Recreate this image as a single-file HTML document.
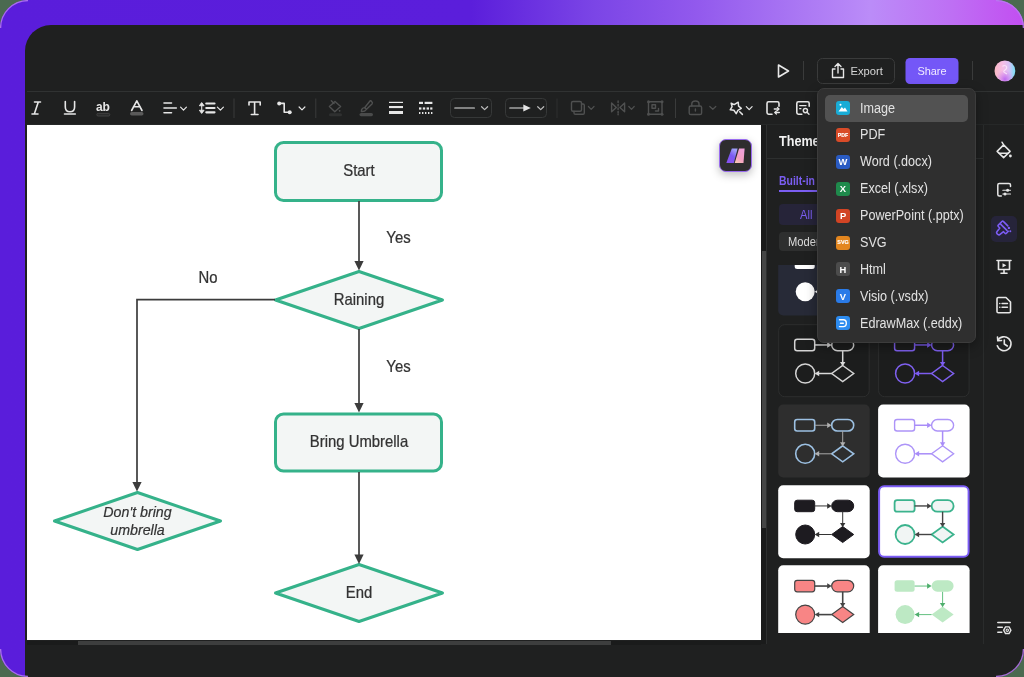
<!DOCTYPE html>
<html><head><meta charset="utf-8">
<style>
*{margin:0;padding:0;box-sizing:border-box}
html,body{width:1024px;height:677px;overflow:hidden;background:#4b6a50;font-family:"Liberation Sans",sans-serif}
#root{position:absolute;left:0;top:0;width:1024px;height:677px;will-change:transform}
.abs{position:absolute}
#frame{position:absolute;left:0;top:0;width:1024px;height:677px;border-radius:28px;overflow:hidden;
 background:linear-gradient(90deg,#5a1ddb 0%,#5b1edb 46%,#7b45e6 58%,#9259ed 68%,#bb8cf8 85%,#be6ff4 93%,#c24ef1 100%)}
#app{position:absolute;left:25px;top:25px;width:999px;height:652px;background:#1f2020;border-top-left-radius:26px;overflow:hidden}
.hline{position:absolute;height:1px;background:#2f3131}
.vline{position:absolute;width:1px;background:#3a3b3b}
.ic{position:absolute;overflow:visible}
.t{position:absolute;white-space:nowrap;transform-origin:0 0}
</style></head>
<body><div id="root">
<div id="frame"><div id="app"></div></div>
<svg class="abs" style="left:0;top:0" width="1024" height="677" viewBox="0 0 1024 677">
 <g fill="none" stroke="#b97af2" stroke-width="1.3" opacity="0.85">
  <path d="M0.6 28 A27.4 27.4 0 0 1 28 0.6"/>
  <path d="M996 0.6 A27.4 27.4 0 0 1 1023.4 28"/>
  <path d="M1023.4 649 A27.4 27.4 0 0 1 996 676.4"/>
  <path d="M28 676.4 A27.4 27.4 0 0 1 0.6 649"/>
 </g>
</svg>

<!-- header -->
<div class="hline" style="left:27px;top:91px;width:997px;background:#303232"></div>
<div class="hline" style="left:27px;top:124px;width:997px;background:#262828"></div>


<!-- toolbar svg -->
<svg class="abs" style="left:0;top:0" width="1024" height="125" viewBox="0 0 1024 125">
 <g fill="none" stroke="#e8e8e8" stroke-width="1.6" stroke-linecap="round" stroke-linejoin="round">
  <!-- play -->
  <path d="M778.5 65 L788.5 71 L778.5 77 Z"/>
 </g>
 <!-- header separators -->
 <rect x="803" y="61" width="1" height="19" fill="#3a3b3b"/>
 <rect x="972" y="61" width="1" height="19" fill="#3a3b3b"/>
 <!-- export btn -->
 <rect x="817.5" y="58.5" width="77" height="25" rx="5" fill="#1f2020" stroke="#3a3b3b"/>
 <g fill="none" stroke="#e6e6e6" stroke-width="1.4" stroke-linecap="round" stroke-linejoin="round">
  <path d="M835 69 L832.5 69 L832.5 77.5 L843.5 77.5 L843.5 69 L841 69"/>
  <path d="M838 73 L838 63.5 M835 66.5 L838 63.5 L841 66.5"/>
 </g>
 <text x="850.5" y="75" fill="#d6d6d6" font-size="11.8" transform="translate(850.5 0) scale(0.95 1) translate(-850.5 0)">Export</text>
 <!-- share btn -->
 <rect x="905.5" y="58" width="53" height="26" rx="4.5" fill="#7457f7"/>
 <text x="932" y="75" fill="#f0ebff" font-size="11.4" text-anchor="middle" transform="translate(932 0) scale(0.96 1) translate(-932 0)">Share</text>
 <!-- avatar -->
 <defs>
  <linearGradient id="av" x1="0" y1="0" x2="1" y2="0">
   <stop offset="0" stop-color="#f9b9c4"/><stop offset="0.4" stop-color="#f6bde6"/><stop offset="0.7" stop-color="#d9c0f6"/><stop offset="1" stop-color="#74e0f4"/>
  </linearGradient>
  <radialGradient id="av2" cx="0.5" cy="0.9" r="0.45"><stop offset="0" stop-color="#b860f0" stop-opacity="0.9"/><stop offset="1" stop-color="#d080f0" stop-opacity="0"/></radialGradient>
 </defs>
 <circle cx="1004.9" cy="70.9" r="10.4" fill="url(#av)"/>
 <circle cx="1004.9" cy="70.9" r="10.4" fill="url(#av2)"/>
 <g fill="none" stroke="#fbe6fa" stroke-width="1.1" opacity="0.85">
  <path d="M1002.5 66.5 Q1004.5 64.5 1006.5 66.5 Q1007.5 68.5 1004.5 70.5 Q1003 71.5 1004.5 72.5 L1007 74"/>
 </g>

 <!-- toolbar: bright icons -->
 <g fill="none" stroke="#e6e6e6" stroke-width="1.6" stroke-linecap="round" stroke-linejoin="round">
  <!-- italic -->
  <path d="M34.5 102 L40.5 102 M32 114 L38 114 M38.3 102 L34.3 114"/>
  <!-- underline -->
  <path d="M65.3 101.5 L65.3 107 Q65.3 111.8 70 111.8 Q74.6 111.8 74.6 107 L74.6 101.5"/>
  <path d="M64.5 114 L75.3 114"/>
  <!-- A -->
  <path d="M131.6 110.5 L136.8 100.8 L142 110.5 M133.4 106.8 L140.2 106.8"/>
  <!-- align -->
  <path d="M164 103 L171.5 103 M164 108 L176.3 108 M164 112.7 L171.5 112.7"/>
  <path d="M180.6 107.2 L183.5 110.2 L186.4 107.2" stroke-width="1.2"/>
  <!-- line spacing -->
  <path d="M201.7 105 L201.7 111" stroke-width="1.1"/>
  <path d="M199.6 105.4 L201.7 102.6 L203.8 105.4 Z M199.6 110.6 L201.7 113.4 L203.8 110.6 Z" fill="#e6e6e6" stroke-width="1"/>
  <path d="M206.3 103.5 L214.5 103.5 M206.3 108 L214.5 108 M206.3 112.3 L214.5 112.3" stroke-width="2.2"/>
  <path d="M217.4 107.2 L220.4 110.2 L223.4 107.2" stroke-width="1.2"/>
  <!-- T -->
  <path d="M249 105 L249 102 L260.2 102 L260.2 105 M254.6 102 L254.6 114.5 M251.3 114.5 L258 114.5"/>
  <!-- connector -->
  <path d="M279.2 103.4 L284.2 103.4 L284.2 112.2 L289.7 112.2"/>
  <path d="M299.1 107 L302 109.9 L304.9 107" stroke-width="1.2"/>
  <!-- star wand -->
  <path d="M731.2 103.2 L734.2 104.6 L738.2 102.2 L738.6 106.2 L741.3 108.4 L737.9 110.4 L736.2 113.6 L733.9 110.3 L730.2 109.8 L732.1 106.6 Z" stroke-width="1.5"/>
  <path d="M739.7 111.8 L742.4 114.4" stroke-width="1.5"/>
  <path d="M746.3 106.7 L749.2 109.6 L752.1 106.7" stroke-width="1.2"/>
  <!-- replace -->
  <path d="M772 114.2 L768.6 114.2 Q767 114.2 767 112.6 L767 103.4 Q767 101.8 768.6 101.8 L777.4 101.8 Q779 101.8 779 103.4 L779 106.3"/>
  <path d="M774.3 109 L778.5 109 M779.3 112.5 L775.2 112.5" stroke-width="1.4"/>
  <path d="M777.4 107.5 L779 109 L777.4 110.5 M776.4 111 L774.8 112.5 L776.4 114" stroke-width="1.2"/>
  <!-- search doc -->
  <path d="M801.8 114.2 L798.4 114.2 Q796.8 114.2 796.8 112.6 L796.8 103.4 Q796.8 101.8 798.4 101.8 L807.6 101.8 Q809.2 101.8 809.2 103.4 L809.2 106.3"/>
  <path d="M799.7 105.6 L806 105.6 M799.7 108.7 L800.9 108.7" stroke-width="1.3"/>
  <circle cx="805.4" cy="110.6" r="2.1" stroke-width="1.4"/>
  <path d="M807 112.3 L809 114.3" stroke-width="1.4"/>
 </g>
 <!-- connector dots -->
 <circle cx="279.2" cy="103.4" r="2" fill="#e6e6e6"/>
 <circle cx="289.7" cy="112.2" r="2" fill="#e6e6e6"/>
 <!-- ab text -->
 <text x="96" y="110.6" fill="#e6e6e6" font-size="12" font-weight="bold" letter-spacing="-0.1">ab</text>
 <rect x="96.8" y="113.4" width="13" height="2.6" rx="1.3" fill="#2a2b2b" stroke="#484848" stroke-width="0.8"/>
 <!-- A bar -->
 <rect x="130" y="112" width="13.5" height="3.4" rx="1.7" fill="#5a5a5a"/>
 <!-- line thickness -->
 <rect x="389" y="101.8" width="14" height="1.2" fill="#e6e6e6"/>
 <rect x="389" y="106" width="14" height="2.1" fill="#e6e6e6"/>
 <rect x="389" y="111" width="14" height="3" fill="#e6e6e6"/>
 <!-- dashes -->
 <g fill="#e6e6e6">
  <rect x="419" y="101.8" width="4" height="2.2"/><rect x="424.6" y="101.8" width="7.8" height="2.2"/>
  <rect x="419" y="107.4" width="2.4" height="2.2"/><rect x="422.8" y="107.4" width="2.4" height="2.2"/><rect x="426.6" y="107.4" width="2.4" height="2.2"/><rect x="430.2" y="107.4" width="2.2" height="2.2"/>
  <rect x="419" y="112" width="1.4" height="2"/><rect x="422" y="112" width="1.4" height="2"/><rect x="425" y="112" width="1.4" height="2"/><rect x="428" y="112" width="1.4" height="2"/><rect x="431" y="112" width="1.4" height="2"/>
 </g>
 <!-- separators -->
 <rect x="233.5" y="98.5" width="1" height="19.5" fill="#3a3b3b"/>
 <rect x="315.3" y="98.5" width="1" height="19.5" fill="#3a3b3b"/>
 <rect x="556.5" y="98.5" width="1" height="19.5" fill="#2e2f2f"/>
 <rect x="675" y="98.5" width="1" height="19.5" fill="#3a3b3b"/>
 <!-- dropdown boxes -->
 <rect x="450.5" y="98.5" width="41" height="19" rx="4" fill="none" stroke="#363838"/>
 <rect x="505.5" y="98.5" width="41" height="19" rx="4" fill="none" stroke="#363838"/>
 <g fill="none" stroke="#c8c8c8" stroke-linecap="round" stroke-linejoin="round">
  <path d="M455 108 L474.2 108" stroke-width="1.7" stroke="#a2a2a2"/>
  <path d="M481.6 106.7 L484.6 109.6 L487.6 106.7" stroke-width="1.2" stroke="#bdbdbd"/>
  <path d="M510 108 L523.5 108" stroke-width="1.7" stroke="#a2a2a2"/>
  <path d="M537.7 106.7 L540.7 109.6 L543.7 106.7" stroke-width="1.2" stroke="#bdbdbd"/>
 </g>
 <path d="M523.3 104.4 L530.8 108 L523.3 111.6 Z" fill="#e4e4e4"/>
 <!-- dim icons -->
 <g fill="none" stroke="#4f5050" stroke-width="1.4" stroke-linecap="round" stroke-linejoin="round">
  <!-- bucket -->
  <path d="M335 101.5 L340.6 106.6 L334.8 111.8 L329.4 106.6 Z"/>
  <path d="M331.3 100.8 L334 103.5"/>
  <!-- brush -->
  <path d="M371.8 101.8 Q373 102.8 372 104 L366.5 109.2 M370.2 100.8 Q371 100.4 371.8 101.8 M370.2 100.8 L364.8 107.5"/>
  <path d="M364.6 107.6 Q361.2 108 361.4 111.5 Q364.8 111.8 366.4 109.3 Z"/>
  <!-- layers -->
  <rect x="571.5" y="101.5" width="10" height="9.8" rx="1.5"/>
  <path d="M581.5 104 L583 104 Q584.3 104 584.3 105.3 L584.3 113 Q584.3 114.3 583 114.3 L575.3 114.3 Q574 114.3 574 113 L574 111.3"/>
  <path d="M588.4 106.5 L591.2 109.3 L594 106.5" stroke-width="1.2"/>
  <!-- flip -->
  <path d="M611.6 103 L611.6 111.8 L616.3 107.4 Z M624.6 103 L624.6 111.8 L619.9 107.4 Z"/>
  <path d="M618.1 101 L618.1 102.5 M618.1 104.5 L618.1 106 M618.1 108 L618.1 109.5 M618.1 111.5 L618.1 113 M618.1 114.3 L618.1 114.8"/>
  <path d="M628.8 106.5 L631.5 109.3 L634.2 106.5" stroke-width="1.2"/>
  <!-- group -->
  <rect x="648.5" y="101.8" width="13.5" height="12.5"/>
  <rect x="652" y="104.8" width="3.5" height="3.5"/>
  <path d="M658.5 108.5 L658.5 111 L655.5 111"/>
  <!-- lock -->
  <rect x="689.2" y="106" width="12.4" height="8.5" rx="1.6"/>
  <path d="M691.8 106 L691.8 104 Q691.8 101 695.4 101 Q699 101 699 104 L699 106 M695.4 109 L695.4 111"/>
  <path d="M709.8 106.5 L712.8 109.3 L715.8 106.5" stroke-width="1.2"/>
 </g>
 <g fill="#4f5050">
  <circle cx="648.5" cy="101.8" r="1.5"/><circle cx="662" cy="101.8" r="1.5"/><circle cx="648.5" cy="114.3" r="1.5"/><circle cx="662" cy="114.3" r="1.5"/>
  <circle cx="339.6" cy="110.8" r="0.9"/>
  <rect x="329" y="113.2" width="13" height="3" rx="1.5" fill="#2f3030"/>
  <rect x="359.5" y="113" width="13.5" height="3.2" rx="1.6" fill="#4a4b4b"/>
 </g>
</svg>

<!-- canvas -->
<div class="abs" style="left:27px;top:125px;width:734px;height:515px;background:#fff;overflow:hidden">
<svg class="abs" style="left:-27px;top:-125px" width="1024" height="677" viewBox="0 0 1024 677">
 <g fill="#f3f6f5" stroke="#35b28a" stroke-width="3" stroke-linejoin="round">
  <rect x="275.5" y="142.5" width="166" height="58" rx="8"/>
  <polygon points="275.5,300 359,271.5 442.5,300 359,328.5"/>
  <rect x="275.5" y="414" width="166" height="57" rx="8"/>
  <polygon points="275.5,593 359,564.5 442.5,593 359,621.5"/>
  <polygon points="54.5,521 137.5,492.5 220.5,521 137.5,549.5"/>
 </g>
 <g stroke="#3c3c3c" stroke-width="1.7" fill="none">
  <line x1="359" y1="201" x2="359" y2="263"/>
  <line x1="359" y1="329" x2="359" y2="405"/>
  <line x1="359" y1="472" x2="359" y2="556"/>
  <polyline points="275,299.6 137,299.6 137,484"/>
 </g>
 <g fill="#3c3c3c">
  <polygon points="354.4,261 363.6,261 359,270.5"/>
  <polygon points="354.4,403 363.6,403 359,412.5"/>
  <polygon points="354.4,554.5 363.6,554.5 359,564"/>
  <polygon points="132.4,482 141.6,482 137,491.5"/>
 </g>
 <g fill="#333" font-family="Liberation Sans" font-size="16" stroke="#333" stroke-width="0.25" text-anchor="middle">
  <text transform="translate(359.0,176.1) scale(0.93,1)">Start</text>
  <text transform="translate(359.0,305.0) scale(0.93,1)">Raining</text>
  <text transform="translate(359.0,447.1) scale(0.93,1)">Bring Umbrella</text>
  <text transform="translate(359.0,597.7) scale(0.93,1)">End</text>
  <text transform="translate(398.5,243.2) scale(0.93,1)">Yes</text>
  <text transform="translate(398.5,372.1) scale(0.93,1)">Yes</text>
  <text transform="translate(208.0,282.5) scale(0.93,1)">No</text>
 </g>
 <g fill="#333" font-family="Liberation Sans" font-style="italic" font-size="15" text-anchor="middle" stroke="#333" stroke-width="0.2">
  <text transform="translate(137.5,517) scale(0.95,1)">Don't bring</text>
  <text transform="translate(137.5,534.5) scale(0.95,1)">umbrella</text>
 </g>
</svg>
</div>

<!-- canvas scrollbars -->
<div class="abs" style="left:761px;top:125px;width:4.5px;height:519px;background:#1a1b1b"></div>
<div class="abs" style="left:761.5px;top:251px;width:4px;height:276.5px;background:#454646"></div>
<div class="abs" style="left:27px;top:640.5px;width:734px;height:4px;background:#1a1b1b"></div>
<div class="abs" style="left:78px;top:641px;width:532.5px;height:4px;background:#3d3e3e"></div>
<div class="abs" style="left:765.5px;top:125px;width:1px;height:519px;background:#2d2f2f"></div>
<div class="abs" style="left:983px;top:125px;width:1px;height:519px;background:#2a2c2c"></div>
<!-- panel header -->
<div class="hline" style="left:766px;top:158px;width:217px;background:#2d2f2f"></div>
<div class="t" style="left:779px;top:133.4px;font-size:14px;font-weight:bold;color:#f2f2f2;transform:scaleX(0.9)">Theme</div>
<div class="t" style="left:778.5px;top:173.5px;font-size:12px;font-weight:bold;color:#7b5ef2;transform:scaleX(0.87)">Built-in</div>
<div class="abs" style="left:778.5px;top:190px;width:50px;height:2px;background:#7b5ef2"></div>
<div class="abs" style="left:778.5px;top:204px;width:90px;height:20.5px;border-radius:4px;background:#262439"></div>
<div class="t" style="left:799.5px;top:207.5px;font-size:12px;color:#7a5ef0;transform:scaleX(0.93)">All</div>
<div class="abs" style="left:778.5px;top:232px;width:90px;height:19px;border-radius:4px;background:#2e2f2f"></div>
<div class="t" style="left:787.5px;top:234.5px;font-size:12px;color:#dedede;transform:scaleX(0.93)">Modern</div>
<!-- theme cards -->
<div class="abs" style="left:766px;top:264.8px;width:217px;height:368.5px;overflow:hidden">
<svg class="abs" style="left:-766px;top:-264.8px" width="1024" height="677" viewBox="0 0 1024 677">
<rect x="778.2" y="242.5" width="91.5" height="73" rx="5" fill="#272a37"/>
<g fill="#ffffff" stroke="none"><rect x="794.7" y="257.5" width="20" height="11.5" rx="2.5"/><rect x="831.7" y="257.5" width="22" height="11.5" rx="5.75"/><path d="M842.7 283.8 L853.7 291.8 L842.7 299.8 L831.7 291.8 Z"/><circle cx="805.2" cy="291.8" r="9.5"/></g>
<g stroke="#ffffff" stroke-width="1" fill="none"><path d="M814.7 263.25 L828.2 263.25"/><path d="M842.7 269.0 L842.7 281.3"/><path d="M831.7 291.8 L818.2 291.8"/></g>
<g fill="#fff"><path d="M827.2 260.5 L831.7 263.25 L827.2 266.0 Z"/><path d="M840.0 280.3 L842.7 284.5 L845.4000000000001 280.3 Z"/><path d="M819.2 289.1 L814.7 291.8 L819.2 294.5 Z"/></g>
<rect x="878.1" y="242.5" width="91.5" height="73" rx="5" fill="#272a37"/>
<g fill="#ffffff" stroke="none"><rect x="894.6" y="257.5" width="20" height="11.5" rx="2.5"/><rect x="931.6" y="257.5" width="22" height="11.5" rx="5.75"/><path d="M942.6 283.8 L953.6 291.8 L942.6 299.8 L931.6 291.8 Z"/><circle cx="905.1" cy="291.8" r="9.5"/></g>
<g stroke="#ffffff" stroke-width="1" fill="none"><path d="M914.6 263.25 L928.1 263.25"/><path d="M942.6 269.0 L942.6 281.3"/><path d="M931.6 291.8 L918.1 291.8"/></g>
<g fill="#fff"><path d="M927.1 260.5 L931.6 263.25 L927.1 266.0 Z"/><path d="M939.9 280.3 L942.6 284.5 L945.3000000000001 280.3 Z"/><path d="M919.1 289.1 L914.6 291.8 L919.1 294.5 Z"/></g>
<rect x="778.7" y="324.7" width="90.5" height="72" rx="6" fill="#1c1d1d" stroke="#2d2e2e" stroke-width="1"/>
<g fill="none" stroke="#d4d4d4" stroke-width="1.5"><rect x="794.7" y="339.2" width="20" height="11.5" rx="2.5"/><rect x="831.7" y="339.2" width="22" height="11.5" rx="5.75"/><path d="M842.7 365.5 L853.7 373.5 L842.7 381.5 L831.7 373.5 Z"/><circle cx="805.2" cy="373.5" r="9.5"/></g>
<g stroke="#d9d9d9" stroke-width="1.5" fill="none"><path d="M814.7 344.95 L828.2 344.95"/><path d="M842.7 350.7 L842.7 363.0"/><path d="M831.7 373.5 L818.2 373.5"/></g>
<g fill="#d9d9d9"><path d="M827.2 342.2 L831.7 344.95 L827.2 347.7 Z"/><path d="M840.0 362.0 L842.7 366.2 L845.4000000000001 362.0 Z"/><path d="M819.2 370.8 L814.7 373.5 L819.2 376.2 Z"/></g>
<rect x="878.6" y="324.7" width="90.5" height="72" rx="6" fill="#1c1d1d" stroke="#2d2e2e" stroke-width="1"/>
<g fill="none" stroke="#7f60f0" stroke-width="1.5"><rect x="894.6" y="339.2" width="20" height="11.5" rx="2.5"/><rect x="931.6" y="339.2" width="22" height="11.5" rx="5.75"/><path d="M942.6 365.5 L953.6 373.5 L942.6 381.5 L931.6 373.5 Z"/><circle cx="905.1" cy="373.5" r="9.5"/></g>
<g stroke="#7c5cf0" stroke-width="1.5" fill="none"><path d="M914.6 344.95 L928.1 344.95"/><path d="M942.6 350.7 L942.6 363.0"/><path d="M931.6 373.5 L918.1 373.5"/></g>
<g fill="#7c5cf0"><path d="M927.1 342.2 L931.6 344.95 L927.1 347.7 Z"/><path d="M939.9 362.0 L942.6 366.2 L945.3000000000001 362.0 Z"/><path d="M919.1 370.8 L914.6 373.5 L919.1 376.2 Z"/></g>
<rect x="778.2" y="404.5" width="91.5" height="73" rx="5" fill="#2e2e2e"/>
<g fill="none" stroke="#9cc0e2" stroke-width="1.6"><rect x="794.7" y="419.5" width="20" height="11.5" rx="2.5"/><rect x="831.7" y="419.5" width="22" height="11.5" rx="5.75"/><path d="M842.7 445.8 L853.7 453.8 L842.7 461.8 L831.7 453.8 Z"/><circle cx="805.2" cy="453.8" r="9.5"/></g>
<g stroke="#a8a8a8" stroke-width="1" fill="none"><path d="M814.7 425.25 L828.2 425.25"/><path d="M842.7 431.0 L842.7 443.3"/><path d="M831.7 453.8 L818.2 453.8"/></g>
<g fill="#b0b0b0"><path d="M827.2 422.5 L831.7 425.25 L827.2 428.0 Z"/><path d="M840.0 442.3 L842.7 446.5 L845.4000000000001 442.3 Z"/><path d="M819.2 451.1 L814.7 453.8 L819.2 456.5 Z"/></g>
<rect x="878.1" y="404.5" width="91.5" height="73" rx="5" fill="#ffffff"/>
<g fill="none" stroke="#ad94f8" stroke-width="1.4"><rect x="894.6" y="419.5" width="20" height="11.5" rx="2.5"/><rect x="931.6" y="419.5" width="22" height="11.5" rx="5.75"/><path d="M942.6 445.8 L953.6 453.8 L942.6 461.8 L931.6 453.8 Z"/><circle cx="905.1" cy="453.8" r="9.5"/></g>
<g stroke="#a88cf8" stroke-width="1.5" fill="none"><path d="M914.6 425.25 L928.1 425.25"/><path d="M942.6 431.0 L942.6 443.3"/><path d="M931.6 453.8 L918.1 453.8"/></g>
<g fill="#a88cf8"><path d="M927.1 422.5 L931.6 425.25 L927.1 428.0 Z"/><path d="M939.9 442.3 L942.6 446.5 L945.3000000000001 442.3 Z"/><path d="M919.1 451.1 L914.6 453.8 L919.1 456.5 Z"/></g>
<rect x="778.2" y="485.2" width="91.5" height="73" rx="5" fill="#ffffff"/>
<g fill="#1d1b20" stroke="#1d1b20" stroke-width="1"><rect x="794.7" y="500.2" width="20" height="11.5" rx="2.5"/><rect x="831.7" y="500.2" width="22" height="11.5" rx="5.75"/><path d="M842.7 526.5 L853.7 534.5 L842.7 542.5 L831.7 534.5 Z"/><circle cx="805.2" cy="534.5" r="9.5"/></g>
<g stroke="#333" stroke-width="1" fill="none"><path d="M814.7 505.95 L828.2 505.95"/><path d="M842.7 511.7 L842.7 524.0"/><path d="M831.7 534.5 L818.2 534.5"/></g>
<g fill="#333"><path d="M827.2 503.2 L831.7 505.95 L827.2 508.7 Z"/><path d="M840.0 523.0 L842.7 527.2 L845.4000000000001 523.0 Z"/><path d="M819.2 531.8 L814.7 534.5 L819.2 537.2 Z"/></g>
<rect x="879.1" y="486.2" width="89.5" height="70.5" rx="5" fill="#ffffff" stroke="#7b5cf5" stroke-width="2"/>
<g fill="#f1f5f4" stroke="#3bb38d" stroke-width="1.8"><rect x="894.6" y="500.2" width="20" height="11.5" rx="2.5"/><rect x="931.6" y="500.2" width="22" height="11.5" rx="5.75"/><path d="M942.6 526.5 L953.6 534.5 L942.6 542.5 L931.6 534.5 Z"/><circle cx="905.1" cy="534.5" r="9.5"/></g>
<g stroke="#444" stroke-width="1.4" fill="none"><path d="M914.6 505.95 L928.1 505.95"/><path d="M942.6 511.7 L942.6 524.0"/><path d="M931.6 534.5 L918.1 534.5"/></g>
<g fill="#444"><path d="M927.1 503.2 L931.6 505.95 L927.1 508.7 Z"/><path d="M939.9 523.0 L942.6 527.2 L945.3000000000001 523.0 Z"/><path d="M919.1 531.8 L914.6 534.5 L919.1 537.2 Z"/></g>
<rect x="778.2" y="565.3" width="91.5" height="73" rx="5" fill="#ffffff"/>
<g fill="#f88585" stroke="#444" stroke-width="1.2"><rect x="794.7" y="580.3" width="20" height="11.5" rx="2.5"/><rect x="831.7" y="580.3" width="22" height="11.5" rx="5.75"/><path d="M842.7 606.5999999999999 L853.7 614.5999999999999 L842.7 622.5999999999999 L831.7 614.5999999999999 Z"/><circle cx="805.2" cy="614.5999999999999" r="9.5"/></g>
<g stroke="#444" stroke-width="1.6" fill="none"><path d="M814.7 586.05 L828.2 586.05"/><path d="M842.7 591.8 L842.7 604.0999999999999"/><path d="M831.7 614.5999999999999 L818.2 614.5999999999999"/></g>
<g fill="#444"><path d="M827.2 583.3 L831.7 586.05 L827.2 588.8 Z"/><path d="M840.0 603.0999999999999 L842.7 607.3 L845.4000000000001 603.0999999999999 Z"/><path d="M819.2 611.8999999999999 L814.7 614.5999999999999 L819.2 617.3 Z"/></g>
<rect x="878.1" y="565.3" width="91.5" height="73" rx="5" fill="#ffffff"/>
<g fill="#bde9c4" stroke="none"><rect x="894.6" y="580.3" width="20" height="11.5" rx="2.5"/><rect x="931.6" y="580.3" width="22" height="11.5" rx="5.75"/><path d="M942.6 606.5999999999999 L953.6 614.5999999999999 L942.6 622.5999999999999 L931.6 614.5999999999999 Z"/><circle cx="905.1" cy="614.5999999999999" r="9.5"/></g>
<g stroke="#64c080" stroke-width="1" fill="none"><path d="M914.6 586.05 L928.1 586.05"/><path d="M942.6 591.8 L942.6 604.0999999999999"/><path d="M931.6 614.5999999999999 L918.1 614.5999999999999"/></g>
<g fill="#4eae6c"><path d="M927.1 583.3 L931.6 586.05 L927.1 588.8 Z"/><path d="M939.9 603.0999999999999 L942.6 607.3 L945.3000000000001 603.0999999999999 Z"/><path d="M919.1 611.8999999999999 L914.6 614.5999999999999 L919.1 617.3 Z"/></g>
</svg>
</div>
<!-- right sidebar icons -->
<div class="abs" style="left:991px;top:215.5px;width:26px;height:26px;border-radius:5px;background:#26243a"></div>
<svg class="abs" style="left:0;top:0" width="1024" height="677" viewBox="0 0 1024 677">
 <g fill="none" stroke="#e6e6e6" stroke-width="1.6" stroke-linecap="round" stroke-linejoin="round">
  <!-- paint bucket -->
  <path d="M1002 142.2 L1003.6 144.9 M1003.6 144.9 L1010.1 151.4 L1003.6 157.6 L997.1 151.4 Z" stroke-width="1.5"/>
  <path d="M999.3 153.2 L1008 153.2" stroke-width="1.5"/>
  <!-- format -->
  <path d="M1001.3 196 L999.3 196 Q997.8 196 997.8 194.5 L997.8 185 Q997.8 183.5 999.3 183.5 L1009 183.5 Q1010.5 183.5 1010.5 185 L1010.5 186.5" stroke-width="1.5"/>
  <path d="M1002.8 190.2 L1010.5 190.2 M1002.8 194 L1010.5 194" stroke-width="1.1"/>
  <!-- presentation -->
  <path d="M997 260.5 L1011 260.5 M998.5 260.5 L998.5 269.5 L1009.5 269.5 L1009.5 260.5 M1004 269.5 L1004 273 M1001 273.3 L1007 273.3"/>
  <!-- doc -->
  <path d="M998.3 297.5 L1006 297.5 L1010.5 302 L1010.5 311.5 Q1010.5 312.8 1009.2 312.8 L998.3 312.8 Q997 312.8 997 311.5 L997 298.8 Q997 297.5 998.3 297.5 Z"/>
  <path d="M1002 303.5 L1007.5 303.5 M1002 307.3 L1007.5 307.3" stroke-width="1.4"/>
  <!-- history -->
  <path d="M997.8 340.5 A7 7 0 1 1 997.3 345.8"/>
  <path d="M997.5 337 L997.8 340.8 L1001.5 340.5"/>
  <path d="M1004.3 340 L1004.3 344 L1007.3 346"/>
  <!-- settings list bottom -->
  <path d="M997.8 622.4 L1010.2 622.4 M997.8 627.3 L1002.3 627.3 M997.8 632.2 L1001.8 632.2" stroke-width="1.5"/>
 </g>
 <g fill="#e6e6e6">
  <circle cx="1010.4" cy="156" r="1.4"/>
  <path d="M1002.5 263.2 L1006.3 265.3 L1002.5 267.4 Z"/>
  <circle cx="1007.6" cy="190.2" r="1.5"/><circle cx="1005" cy="194" r="1.5"/><circle cx="999.8" cy="303.5" r="0.8"/><circle cx="999.8" cy="307.3" r="0.8"/>
 </g>
 <g fill="none" stroke="#e6e6e6" stroke-width="1.3">
  <path d="M1003.7 630.2 L1005.5 626.9 L1009.1 626.9 L1010.9 630.2 L1009.1 633.5 L1005.5 633.5 Z" stroke-width="1.4"/>
  <circle cx="1007.3" cy="630.2" r="1.2" stroke-width="1.1"/>
 </g>
 <!-- active theme icon (purple) -->
 <g fill="none" stroke="#7c5cf5" stroke-width="1.6" stroke-linecap="round" stroke-linejoin="round">
  <path d="M1007.8 225.9 L1003.3 221.4 Q1002.6 220.8 1001.9 221.5 L998.3 225.1 Q997.6 225.8 998.3 226.5 L999.8 228 L996.9 231.8 Q996.2 232.7 997 233.6 L997.9 234.5 Q998.8 235.3 999.7 234.6 L1003.5 231.7 L1005 233.2 Q1005.7 233.9 1006.4 233.2 L1008.3 231.3 M1000.6 224.1 L1006.9 230.4"/>
 </g>
 <g fill="#7c5cf5"><circle cx="1008.9" cy="227.9" r="1.2"/><circle cx="1010.3" cy="231.2" r="1"/></g>
</svg>

<!-- canvas badge -->
<div class="abs" style="left:718.5px;top:138.5px;width:33px;height:33px;border-radius:7px;background:#2e2d2e;border:1px solid #9a6cf0;box-shadow:0 3px 8px rgba(0,0,0,0.25)">
<svg class="abs" style="left:0;top:0" width="31" height="31" viewBox="0 0 31 31">
 <defs>
  <linearGradient id="lg1" x1="0" y1="1" x2="0.6" y2="0"><stop offset="0" stop-color="#8a4ff0"/><stop offset="0.6" stop-color="#7b5af2"/><stop offset="1" stop-color="#9fa0f8"/></linearGradient>
  <linearGradient id="lg2" x1="0" y1="1" x2="0.5" y2="0"><stop offset="0" stop-color="#f8d0b0"/><stop offset="0.45" stop-color="#f4a0c4"/><stop offset="1" stop-color="#f0a0d8"/></linearGradient>
 </defs>
 <path d="M6.3 23.1 L13.8 23.1 L17.6 8.5 L11.8 8.5 Z" fill="url(#lg1)"/>
 <path d="M14.7 23.1 L19.1 8.5 L24.6 8.5 L23.5 23.1 Z" fill="url(#lg2)"/>
</svg>
</div>

<!-- export menu -->
<div class="abs" style="left:817px;top:88px;width:158.5px;height:255px;border-radius:7px;background:#2f2f2f;border:1px solid #3c3c3c;box-shadow:0 4px 12px rgba(0,0,0,0.35)"></div>
<div class="abs" style="left:825px;top:95px;width:143px;height:27px;border-radius:5px;background:#525252"></div>
<div class="abs" style="left:836px;top:101.20px;width:14px;height:14px;border-radius:3px;background:#19acd6"></div>
<div class="t" style="left:860px;top:99.60px;font-size:14px;color:#e2e2e2;transform:scaleX(0.9)">Image</div>
<div class="abs" style="left:836px;top:128.07px;width:14px;height:14px;border-radius:3px;background:#d94b28"></div>
<div class="t" style="left:860px;top:126.47px;font-size:14px;color:#e2e2e2;transform:scaleX(0.9)">PDF</div>
<div class="abs" style="left:836px;top:154.94px;width:14px;height:14px;border-radius:3px;background:#2a5bc2"></div>
<div class="t" style="left:860px;top:153.34px;font-size:14px;color:#e2e2e2;transform:scaleX(0.9)">Word (.docx)</div>
<div class="abs" style="left:836px;top:181.81px;width:14px;height:14px;border-radius:3px;background:#1f8a4c"></div>
<div class="t" style="left:860px;top:180.21px;font-size:14px;color:#e2e2e2;transform:scaleX(0.9)">Excel (.xlsx)</div>
<div class="abs" style="left:836px;top:208.68px;width:14px;height:14px;border-radius:3px;background:#d24424"></div>
<div class="t" style="left:860px;top:207.08px;font-size:14px;color:#e2e2e2;transform:scaleX(0.9)">PowerPoint (.pptx)</div>
<div class="abs" style="left:836px;top:235.55px;width:14px;height:14px;border-radius:3px;background:#e3861f"></div>
<div class="t" style="left:860px;top:233.95px;font-size:14px;color:#e2e2e2;transform:scaleX(0.9)">SVG</div>
<div class="abs" style="left:836px;top:262.42px;width:14px;height:14px;border-radius:3px;background:#4c4c4c"></div>
<div class="t" style="left:860px;top:260.82px;font-size:14px;color:#e2e2e2;transform:scaleX(0.9)">Html</div>
<div class="abs" style="left:836px;top:289.29px;width:14px;height:14px;border-radius:3px;background:#2a7be8"></div>
<div class="t" style="left:860px;top:287.69px;font-size:14px;color:#e2e2e2;transform:scaleX(0.9)">Visio (.vsdx)</div>
<div class="abs" style="left:836px;top:316.16px;width:14px;height:14px;border-radius:3px;background:#2d8cf0"></div>
<div class="t" style="left:860px;top:314.56px;font-size:14px;color:#e2e2e2;transform:scaleX(0.9)">EdrawMax (.eddx)</div>
<svg class="abs" style="left:0;top:0" width="1024" height="677" viewBox="0 0 1024 677">
 <g fill="#fff">
  <path d="M838.5 111.5 L841.8 107 L843.5 109 L845 107.5 L847.5 111.5 Z"/>
  <circle cx="840.5" cy="104.8" r="1"/>
 </g>
 <g fill="#fff" font-family="Liberation Sans" font-weight="bold" text-anchor="middle" stroke="#fff" stroke-width="0.15">
  <text x="843" y="136.97" font-size="5.2">PDF</text>
  <text x="843" y="165.24" font-size="9.4" stroke-width="0">W</text>
  <text x="843" y="192.11" font-size="9.4" stroke-width="0">X</text>
  <text x="843.2" y="218.98" font-size="9.4" stroke-width="0">P</text>
  <text x="843" y="244.45" font-size="5.4">SVG</text>
  <text x="843" y="272.72" font-size="9.4" stroke-width="0">H</text>
  <text x="843" y="299.59" font-size="9.4" stroke-width="0">V</text>
 </g>
 <g fill="none" stroke="#fff" stroke-width="1.4" stroke-linecap="round">
  <path d="M839.5 319.8 L843.3 319.8 Q846.3 319.8 846.3 323.2 Q846.3 326.6 843.3 326.6 L839.5 326.6 M840.5 323.2 L843.3 323.2"/>
 </g>
</svg>

</div></body></html>
